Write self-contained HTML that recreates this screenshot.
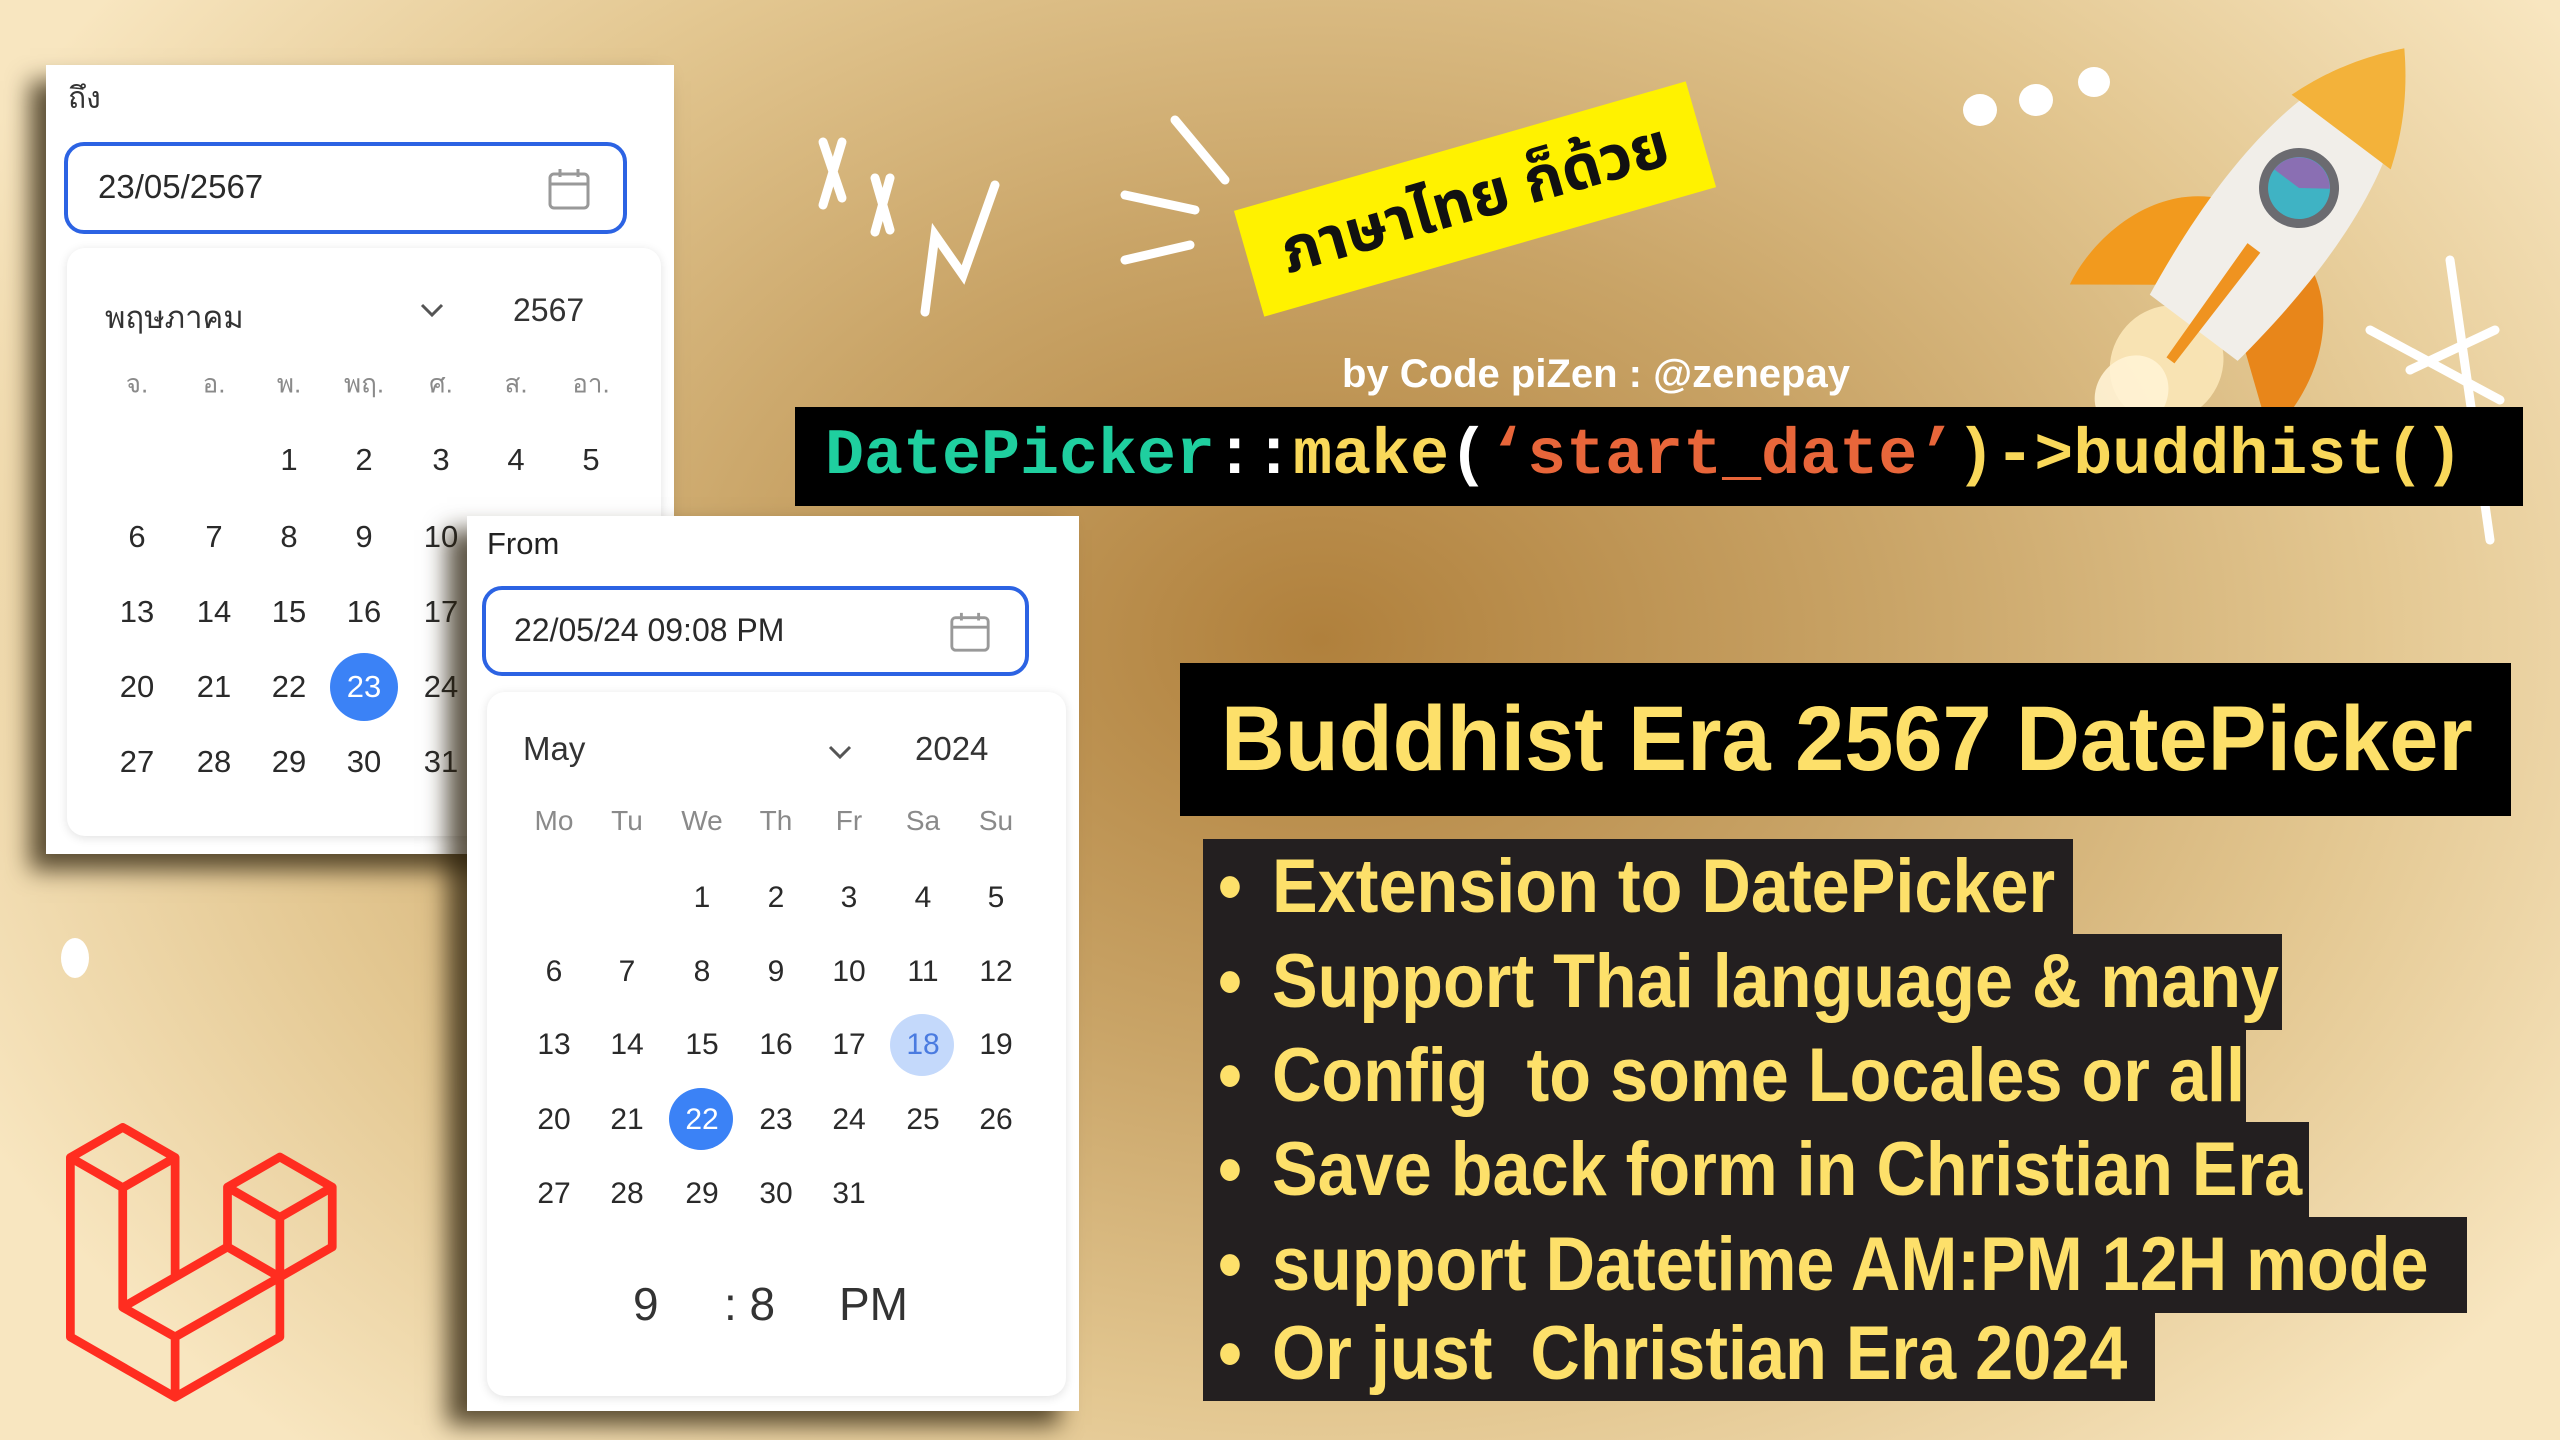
<!DOCTYPE html>
<html><head><meta charset="utf-8">
<style>
*{margin:0;padding:0;box-sizing:border-box}
body{width:2560px;height:1440px;overflow:hidden;position:relative;font-family:"Liberation Sans","Noto Sans CJK SC",sans-serif;
background:radial-gradient(ellipse 1500px 1100px at 1320px 640px,#b0803c 0%,#c9a467 38%,#e3c791 70%,#f8e6c0 100%);}
.abs{position:absolute}
.card{position:absolute;background:#fff}
.inp{position:absolute;border:4px solid #2c63e3;border-radius:20px;background:#fff}
.dd{position:absolute;background:#fff;border-radius:18px;box-shadow:0 2px 10px rgba(0,0,0,.12)}
.c{position:absolute;width:70px;text-align:center;color:#2a2a2a;transform:translate(-35px,-50%)}
.hl{position:absolute;border-radius:50%}
.bl{position:absolute;left:1203px;height:96px;background:#231f20}
.bt{position:absolute;left:1218px;font-weight:bold;color:#fde06a;font-size:76px;white-space:nowrap;transform-origin:0 50%;transform:scaleX(0.9);line-height:96px}
.bt b{display:inline-block;width:60px}
</style></head><body>

<svg class="abs" style="left:0;top:0" width="2560" height="1440" viewBox="0 0 2560 1440">
 <g stroke="#fff" stroke-width="9" stroke-linecap="round" fill="none">
  <path d="M823 142 L842 198 M842 142 L823 205"/>
  <path d="M875 178 L890 230 M890 178 L875 232"/>
  <path d="M925 312 L935 235 L963 275 L995 185"/>
  <path d="M1175 120 L1225 180"/>
  <path d="M1125 195 L1195 210"/>
  <path d="M1125 260 L1190 245"/>
  <path d="M2450 260 L2490 540"/>
  <path d="M2370 330 L2500 400"/>
  <path d="M2410 370 L2495 330"/>
 </g>
 <g fill="#fff">
  <ellipse cx="1980" cy="110" rx="17" ry="16"/>
  <ellipse cx="2036" cy="100" rx="17" ry="16"/>
  <ellipse cx="2094" cy="82" rx="16" ry="15"/>
  <ellipse cx="75" cy="958" rx="14" ry="20"/>
 </g>
 <g transform="translate(2290,200) rotate(37)">
  <ellipse cx="0" cy="205" rx="55" ry="60" fill="#fbe7b8" opacity=".9"/>
  <ellipse cx="-10" cy="250" rx="35" ry="40" fill="#fff3d4" opacity=".9"/>
  <path d="M-55 40 C-120 70 -135 150 -125 200 L-45 140 Z" fill="#f29a1e"/>
  <path d="M55 40 C120 70 135 150 125 200 L45 140 Z" fill="#e8861a"/>
  <path d="M0 -190 C62 -120 78 0 55 160 L-55 160 C-78 0 -62 -120 0 -190 Z" fill="#f1eee9"/>
  <path d="M0 -190 C40 -145 55 -105 62 -85 L-62 -85 C-55 -105 -40 -145 0 -190 Z" fill="#f3b23a"/>
  <circle cx="0" cy="-15" r="40" fill="#6b6b70"/>
  <circle cx="0" cy="-15" r="31" fill="#3fb3c4"/>
  <path d="M-31 -15 A31 31 0 0 1 25 -33 L0 -15Z" fill="#8a6fb3"/>
  <path d="M-8 60 L-4 200 L6 200 L8 60 Z" fill="#ef9320"/>
 </g>
 <g transform="translate(66,1123) scale(5.45)" fill="#ff2d20">
  <path d="M49.626 11.564a.809.809 0 0 1 .028.209v10.972a.8.8 0 0 1-.402.694l-9.209 5.302V39.25c0 .286-.152.55-.4.694L20.42 51.01c-.044.025-.092.041-.14.058-.018.006-.035.017-.054.022a.805.805 0 0 1-.41 0c-.022-.006-.042-.018-.063-.026-.044-.016-.09-.03-.132-.054L.402 39.944A.801.801 0 0 1 0 39.25V6.334c0-.072.01-.142.028-.21.006-.023.02-.044.028-.067.015-.042.029-.085.051-.124.015-.026.037-.047.055-.071.023-.032.044-.065.071-.093.023-.023.053-.04.079-.06.029-.024.055-.05.088-.069h.001l9.61-5.533a.802.802 0 0 1 .8 0l9.61 5.533h.002c.032.02.059.045.088.068.026.02.055.038.078.06.028.029.048.062.072.094.017.024.04.045.054.071.023.04.036.082.052.124.008.023.022.044.028.068a.809.809 0 0 1 .028.209v20.559l8.008-4.611v-10.51c0-.07.01-.141.028-.208.007-.024.02-.045.028-.068.016-.042.03-.085.052-.124.015-.026.037-.047.054-.071.024-.032.044-.065.072-.093.023-.023.052-.04.078-.06.03-.024.056-.05.088-.069h.001l9.611-5.533a.801.801 0 0 1 .8 0l9.61 5.533c.034.02.06.045.09.068.025.02.054.038.077.06.028.029.048.062.072.094.018.024.04.045.054.071.023.039.036.082.052.124.009.023.022.044.028.068zm-1.574 10.718v-9.124l-3.363 1.936-4.646 2.675v9.124l8.01-4.611zm-9.61 16.505v-9.13l-4.57 2.61-13.05 7.448v9.216l17.62-10.144zM1.602 7.719v31.068L19.22 48.930v-9.214l-9.204-5.209-.003-.002-.004-.002c-.031-.018-.057-.044-.086-.066-.025-.02-.054-.036-.076-.058l-.002-.003c-.026-.025-.044-.056-.066-.084-.02-.027-.044-.05-.06-.078l-.001-.003c-.018-.03-.029-.066-.042-.1-.013-.03-.03-.058-.038-.09v-.001c-.01-.038-.012-.078-.016-.117-.004-.03-.012-.06-.012-.09v-.002-21.481L4.965 9.654 1.602 7.72zm8.81-5.994L2.405 6.334l8.005 4.609 8.006-4.61-8.006-4.608zm4.164 28.764l4.645-2.674V7.719l-3.363 1.936-4.646 2.675v20.096l3.364-1.937zM39.243 7.164l-8.006 4.609 8.006 4.609 8.005-4.61-8.005-4.608zm-.801 10.605l-4.646-2.675-3.363-1.936v9.124l4.645 2.674 3.364 1.937v-9.124zM20.020 38.330l11.743-6.704 5.870-3.350-8-4.606-9.211 5.303-8.395 4.833 7.993 4.524z"/>
 </g>
</svg>

<div class="abs" style="left:1240px;top:144px;width:470px;height:110px;background:#fff200;transform:rotate(-16deg);font-weight:bold;font-size:62px;line-height:110px;text-align:center;color:#111;font-family:'Liberation Sans','Noto Sans Thai',sans-serif">ภาษาไทย ก็ด้วย</div>

<div class="abs" style="left:1342px;top:352px;color:#fff;font-weight:bold;font-size:40px;white-space:nowrap">by Code piZen : @zenepay</div>

<div class="abs" style="left:795px;top:407px;width:1728px;height:99px;background:#000;font-family:'Liberation Mono',monospace;font-size:65px;line-height:99px;padding-left:30px;white-space:nowrap;font-weight:bold"><span style="color:#1fcf9f">DatePicker</span><span style="color:#fff">::</span><span style="color:#f9d85a">make</span><span style="color:#fff">(</span><span style="color:#e8663a">‘start_date’</span><span style="color:#f9d85a">)-&gt;buddhist()</span></div>

<div class="abs" style="left:1180px;top:663px;width:1331px;height:153px;background:#000"></div>
<div class="abs" style="left:1221px;top:663px;height:153px;line-height:153px;font-size:92px;font-weight:bold;color:#fde06a;white-space:nowrap;transform-origin:0 50%;transform:scaleX(0.96)">Buddhist Era 2567 DatePicker</div>

<div class="bl" style="top:839px;width:870px"></div>
<div class="bl" style="top:934px;width:1079px"></div>
<div class="bl" style="top:1028px;width:1043px"></div>
<div class="bl" style="top:1122px;width:1106px"></div>
<div class="bl" style="top:1217px;width:1264px"></div>
<div class="bl" style="top:1311px;width:952px;height:90px"></div>
<div class="bt" style="top:839px"><b>•</b>Extension to DatePicker</div>
<div class="bt" style="top:934px"><b>•</b>Support Thai language &amp; many</div>
<div class="bt" style="top:1028px"><b>•</b>Config&nbsp; to some Locales or all</div>
<div class="bt" style="top:1122px"><b>•</b>Save back form in Christian Era</div>
<div class="bt" style="top:1217px"><b>•</b>support Datetime AM:PM 12H mode</div>
<div class="bt" style="top:1306px"><b>•</b>Or just&nbsp; Christian Era 2024</div>

<div class="card" style="left:46px;top:65px;width:628px;height:789px;box-shadow:-16px 16px 22px rgba(40,30,10,.75)">
 <div class="abs" style="left:22px;top:10px;font-size:30px;color:#333">ถึง</div>
 <div class="inp" style="left:18px;top:77px;width:563px;height:92px">
  <div class="abs" style="left:30px;top:22px;font-size:33px;color:#2a2a2a">23/05/2567</div>
  <svg class="abs" style="left:478px;top:20px" width="46" height="46" viewBox="0 0 46 46" fill="none" stroke="#999" stroke-width="3"><rect x="4" y="8" width="38" height="34" rx="4"/><path d="M4 18H42M14 3V11M32 3V11"/></svg>
 </div>
 <div class="dd" style="left:21px;top:183px;width:594px;height:588px">
  <div class="abs" style="left:38px;top:44px;font-size:31px;color:#333">พฤษภาคม</div>
  <svg class="abs" style="left:352px;top:54px" width="26" height="16" viewBox="0 0 26 16" fill="none" stroke="#555" stroke-width="3"><path d="M3 3L13 13L23 3"/></svg>
  <div class="abs" style="left:446px;top:44px;font-size:32px;color:#333">2567</div>
 </div>
</div>
<div class="hl" style="left:330px;top:653px;width:68px;height:68px;background:#3b82f6"></div>
<div id="cal1"></div>

<div class="card" style="left:467px;top:516px;width:612px;height:895px;box-shadow:-20px 14px 22px rgba(40,30,10,.75)">
 <div class="abs" style="left:20px;top:10px;font-size:31px;color:#222">From</div>
 <div class="inp" style="left:15px;top:70px;width:547px;height:90px">
  <div class="abs" style="left:28px;top:22px;font-size:32px;color:#2a2a2a">22/05/24 09:08 PM</div>
  <svg class="abs" style="left:462px;top:20px" width="44" height="44" viewBox="0 0 46 46" fill="none" stroke="#999" stroke-width="3"><rect x="4" y="8" width="38" height="34" rx="4"/><path d="M4 18H42M14 3V11M32 3V11"/></svg>
 </div>
 <div class="dd" style="left:20px;top:176px;width:579px;height:704px">
  <div class="abs" style="left:36px;top:38px;font-size:33px;color:#333">May</div>
  <svg class="abs" style="left:340px;top:52px" width="26" height="16" viewBox="0 0 26 16" fill="none" stroke="#555" stroke-width="3"><path d="M3 3L13 13L23 3"/></svg>
  <div class="abs" style="left:428px;top:38px;font-size:33px;color:#333">2024</div>
  <div class="abs" style="left:0;top:585px;width:100%;font-size:46px;color:#333">
   <span class="abs" style="left:146px">9</span><span class="abs" style="left:237px">: 8</span><span class="abs" style="left:352px">PM</span>
  </div>
 </div>
</div>
<div class="hl" style="left:890px;top:1014px;width:64px;height:62px;background:#c4d9fb"></div>
<div class="hl" style="left:669px;top:1088px;width:64px;height:62px;background:#3b82f6"></div>
<div id="cal2"></div>

<script>
(function(){
 function build(id,xs,ys,hy,heads,start,days,fs,hfs,hl){
  var h='';
  for(var i=0;i<7;i++)h+='<div class="c" style="left:'+xs[i]+'px;top:'+hy+'px;font-size:'+hfs+'px;color:#8a8a8a">'+heads[i]+'</div>';
  for(var d=1;d<=days;d++){var p=start+d-1,r=Math.floor(p/7),c=p%7;
   var col=hl[d]||'#2a2a2a';
   h+='<div class="c" style="left:'+xs[c]+'px;top:'+ys[r]+'px;font-size:'+fs+'px;color:'+col+'">'+d+'</div>';}
  document.getElementById(id).innerHTML=h;
 }
 build('cal1',[137,214,289,364,441,516,591],[460,537,612,687,762],384,['จ.','อ.','พ.','พฤ.','ศ.','ส.','อา.'],2,31,31,26,{23:'#fff'});
 build('cal2',[554,627,702,776,849,923,996],[898,972,1045,1120,1194],821,['Mo','Tu','We','Th','Fr','Sa','Su'],2,31,30,28,{22:'#fff',18:'#4a7be0'});
})();
</script>
</body></html>
